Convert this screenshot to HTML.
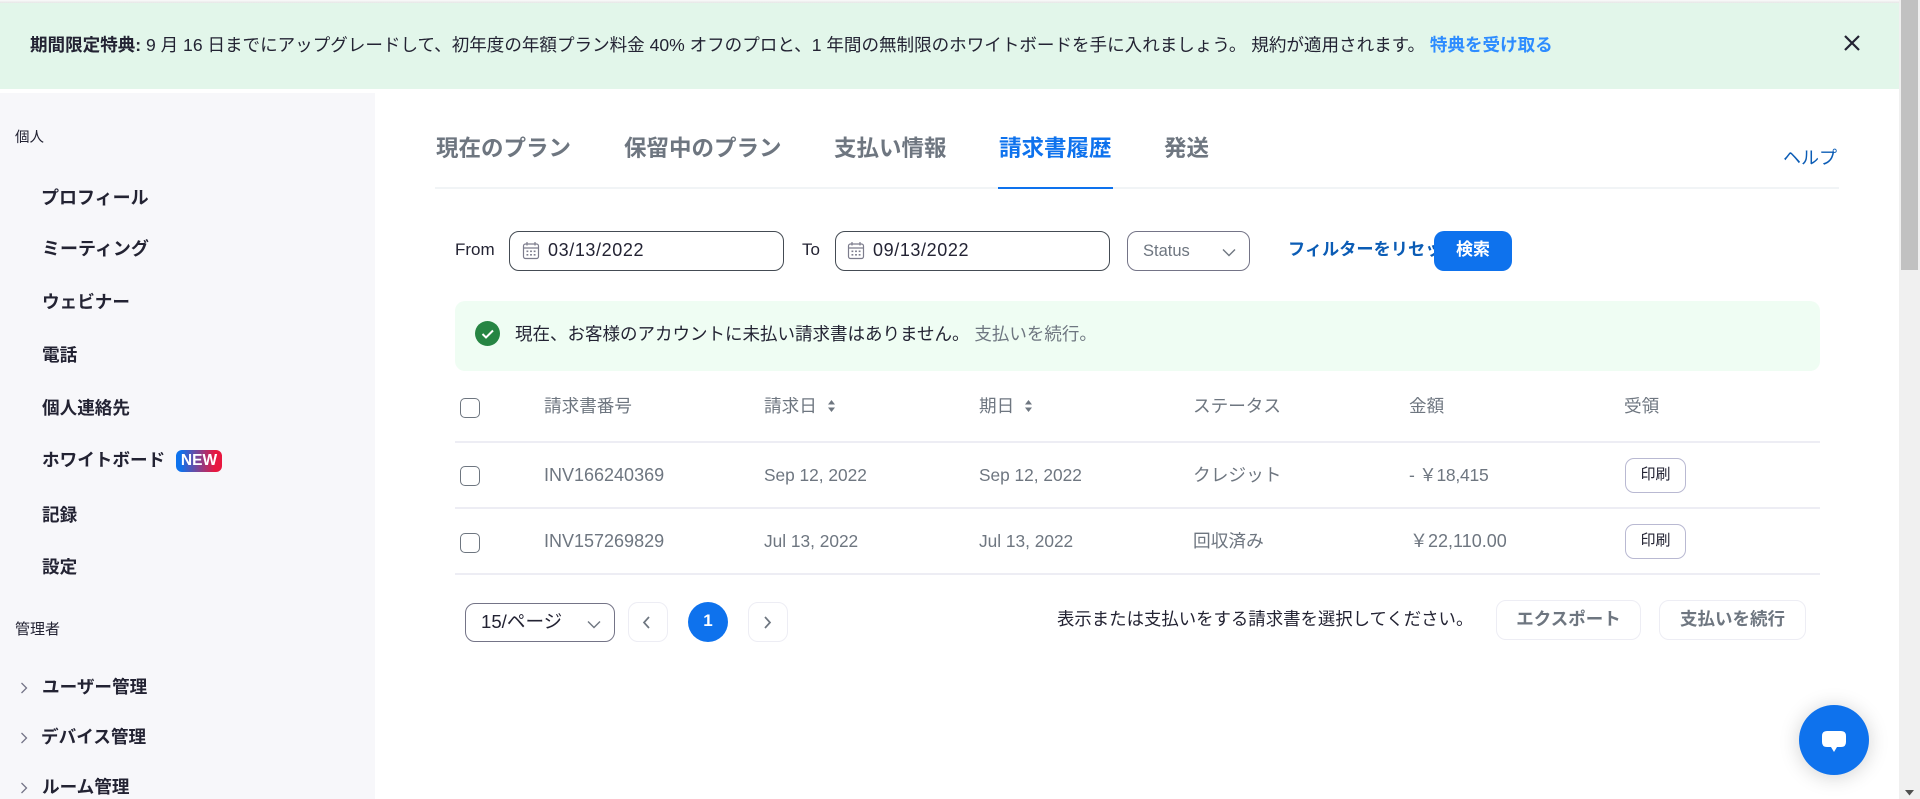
<!DOCTYPE html>
<html lang="ja">
<head>
<meta charset="utf-8">
<title>請求書履歴</title>
<style>
html,body{margin:0;padding:0;width:1920px;height:799px;overflow:hidden;background:#fff}
body{position:relative;font-family:"Liberation Sans","Noto Sans CJK JP",sans-serif;color:#232333}
.t{position:absolute;white-space:nowrap;line-height:26px;height:26px;margin-top:-13px}
.b{position:absolute;box-sizing:border-box;background:#fff}
.s{font-size:17.6px;font-weight:700;left:42px;color:#232333}
.tab{font-size:22.5px;font-weight:700;top:149px;color:#6e7680}
.th{font-size:17.6px;color:#6e7680;top:406px}
.td{font-size:17.5px;color:#6e7680}
.cb{border:1px solid #6e7680;border-radius:5px;width:20px;height:20px;left:460px}
.ln{position:absolute;left:455px;width:1365px;height:2px;background:#ededf4}
.pr{left:1625px;width:61px;height:35px;border:1px solid #b9b9d2;border-radius:9px;font-size:15px;text-align:center;line-height:32px;color:#232333}
.lat{font-size:18px}
.dt{font-size:17.3px}
svg{position:absolute;overflow:visible}
</style>
</head>
<body>
<div style="position:absolute;left:0;top:0;width:1899px;height:3px;background:linear-gradient(#fafafa,#e6e6e6)"></div>
<div style="position:absolute;left:0;top:3px;width:1899px;height:86px;background:#e2f6ea"></div>
<div class="t" style="left:30px;top:45px;font-size:17.56px;color:#232333"><b>期間限定特典:</b> 9 月 16 日までにアップグレードして、初年度の年額プラン料金 40% オフのプロと、1 年間の無制限のホワイトボードを手に入れましょう。 規約が適用されます。 <b style="color:#2d8cff">特典を受け取る</b></div>
<svg style="left:1843px;top:34px" width="18" height="18" viewBox="0 0 18 18"><path d="M2 2 L16 16 M16 2 L2 16" stroke="#232333" stroke-width="2.2" fill="none"/></svg>

<div style="position:absolute;left:0;top:93px;width:375px;height:706px;background:#f7f7fa"></div>
<div class="t" style="left:15px;top:138px;font-size:14.5px">個人</div>
<div class="t s" style="top:198px;left:41px;font-size:18px">プロフィール</div>
<div class="t s" style="top:249px;font-size:18px">ミーティング</div>
<div class="t s" style="top:302px">ウェビナー</div>
<div class="t s" style="top:355px">電話</div>
<div class="t s" style="top:408px">個人連絡先</div>
<div class="t s" style="top:460px">ホワイトボード</div>
<div class="b" style="left:176px;top:450px;width:46px;height:22px;border-radius:6px;background:linear-gradient(90deg,#0e72ed 10%,#e8173f 85%);color:#fff;font-size:15.5px;font-weight:700;text-align:center;line-height:21px">NEW</div>
<div class="t s" style="top:515px">記録</div>
<div class="t s" style="top:567px">設定</div>
<div class="t" style="left:15px;top:630px;font-size:15px">管理者</div>
<div class="t s" style="top:687px">ユーザー管理</div>
<div class="t s" style="top:737px;left:41px">デバイス管理</div>
<div class="t s" style="top:787px">ルーム管理</div>
<svg style="left:20px;top:682px" width="8" height="12" viewBox="0 0 8 12"><path d="M1.5 1 L6.5 6 L1.5 11" stroke="#747487" stroke-width="1.3" fill="none"/></svg>
<svg style="left:20px;top:732px" width="8" height="12" viewBox="0 0 8 12"><path d="M1.5 1 L6.5 6 L1.5 11" stroke="#747487" stroke-width="1.3" fill="none"/></svg>
<svg style="left:20px;top:782px" width="8" height="12" viewBox="0 0 8 12"><path d="M1.5 1 L6.5 6 L1.5 11" stroke="#747487" stroke-width="1.3" fill="none"/></svg>

<div class="t tab" style="left:436px">現在のプラン</div>
<div class="t tab" style="left:624px">保留中のプラン</div>
<div class="t tab" style="left:834px">支払い情報</div>
<div class="t tab" style="left:999px;color:#0e72ed">請求書履歴</div>
<div class="t tab" style="left:1164px">発送</div>
<div style="position:absolute;left:435px;top:187px;width:1404px;height:2px;background:#f1f4f6"></div>
<div style="position:absolute;left:998px;top:187px;width:115px;height:2px;background:#0e72ed"></div>
<div class="t" style="left:1783px;top:158px;font-size:18px;color:#0b5cb5">ヘルプ</div>

<div class="t" style="left:455px;top:250px;font-size:17px">From</div>
<div class="b" style="left:509px;top:231px;width:275px;height:40px;border:1px solid #444b53;border-radius:10px"></div>
<svg style="left:522px;top:241px" width="18" height="19" viewBox="0 0 18 19"><g fill="none" stroke="#7c7c8c" stroke-width="1.2"><rect x="1.5" y="3" width="15" height="14.5" rx="2"/><path d="M1.5 7 H16.5 M5 1 V4.5 M13 1 V4.5"/></g><g fill="#7c7c8c"><rect x="4.5" y="9.5" width="1.8" height="1.6"/><rect x="8.1" y="9.5" width="1.8" height="1.6"/><rect x="11.7" y="9.5" width="1.8" height="1.6"/><rect x="4.5" y="13" width="1.8" height="1.6"/><rect x="8.1" y="13" width="1.8" height="1.6"/><rect x="11.7" y="13" width="1.8" height="1.6"/></g></svg>
<div class="t" style="left:548px;top:250px;font-size:18px;letter-spacing:.6px">03/13/2022</div>
<div class="t" style="left:802px;top:250px;font-size:17px">To</div>
<div class="b" style="left:835px;top:231px;width:275px;height:40px;border:1px solid #444b53;border-radius:10px"></div>
<svg style="left:847px;top:241px" width="18" height="19" viewBox="0 0 18 19"><g fill="none" stroke="#7c7c8c" stroke-width="1.2"><rect x="1.5" y="3" width="15" height="14.5" rx="2"/><path d="M1.5 7 H16.5 M5 1 V4.5 M13 1 V4.5"/></g><g fill="#7c7c8c"><rect x="4.5" y="9.5" width="1.8" height="1.6"/><rect x="8.1" y="9.5" width="1.8" height="1.6"/><rect x="11.7" y="9.5" width="1.8" height="1.6"/><rect x="4.5" y="13" width="1.8" height="1.6"/><rect x="8.1" y="13" width="1.8" height="1.6"/><rect x="11.7" y="13" width="1.8" height="1.6"/></g></svg>
<div class="t" style="left:873px;top:250px;font-size:18px;letter-spacing:.6px">09/13/2022</div>
<div class="b" style="left:1127px;top:231px;width:123px;height:40px;border:1px solid #747487;border-radius:10px"></div>
<div class="t" style="left:1143px;top:251px;font-size:16.5px;color:#6e7680">Status</div>
<svg style="left:1222px;top:248px" width="14" height="9" viewBox="0 0 14 9"><path d="M1 1.5 L7 7.5 L13 1.5" stroke="#6e7680" stroke-width="1.4" fill="none"/></svg>
<div style="position:absolute;left:1288px;top:231px;width:147px;height:40px;overflow:hidden"><div class="t" style="left:0;top:18px;font-size:17.2px;font-weight:700;color:#0b5cb5">フィルターをリセット</div></div>
<div class="b" style="left:1434px;top:231px;width:78px;height:40px;border-radius:10px;background:#0e72ed;color:#fff;font-size:17px;font-weight:700;text-align:center;line-height:38px">検索</div>

<div class="b" style="left:455px;top:301px;width:1365px;height:70px;border-radius:10px;background:#effdf3"></div>
<svg style="left:475px;top:321px" width="25" height="25" viewBox="0 0 25 25"><circle cx="12.5" cy="12.5" r="12.5" fill="#268543"/><path d="M7.5 13 L11 16.5 L18 9.5" stroke="#fff" stroke-width="2" fill="none"/></svg>
<div class="t" style="left:515px;top:334px;font-size:17.5px">現在、お客様のアカウントに未払い請求書はありません。 <span style="color:#6e7680">支払いを続行。</span></div>

<div class="b cb" style="top:398px"></div>
<div class="t th" style="left:544px">請求書番号</div>
<div class="t th" style="left:764px">請求日</div>
<svg style="left:827px;top:399px" width="9" height="14" viewBox="0 0 9 14"><path d="M4.5 1 L8 5.5 H1 Z M4.5 13 L8 8.5 H1 Z" fill="#6e7680"/></svg>
<div class="t th" style="left:979px">期日</div>
<svg style="left:1024px;top:399px" width="9" height="14" viewBox="0 0 9 14"><path d="M4.5 1 L8 5.5 H1 Z M4.5 13 L8 8.5 H1 Z" fill="#6e7680"/></svg>
<div class="t th" style="left:1193px">ステータス</div>
<div class="t th" style="left:1409px">金額</div>
<div class="t th" style="left:1624px">受領</div>
<div class="ln" style="top:441px"></div>

<div class="b cb" style="top:466px"></div>
<div class="t td lat" style="left:544px;top:475px">INV166240369</div>
<div class="t td dt" style="left:764px;top:475px">Sep 12, 2022</div>
<div class="t td dt" style="left:979px;top:475px">Sep 12, 2022</div>
<div class="t td" style="left:1193px;top:475px;font-size:17.7px">クレジット</div>
<div class="t td" style="left:1409px;top:475px;letter-spacing:-.25px">- ￥18,415</div>
<div class="b pr" style="top:458px">印刷</div>
<div class="ln" style="top:507px"></div>

<div class="b cb" style="top:533px"></div>
<div class="t td lat" style="left:544px;top:541px">INV157269829</div>
<div class="t td dt" style="left:764px;top:541px">Jul 13, 2022</div>
<div class="t td dt" style="left:979px;top:541px">Jul 13, 2022</div>
<div class="t td" style="left:1193px;top:541px;font-size:17.7px">回収済み</div>
<div class="t td" style="left:1410px;top:541px;font-size:18px">￥22,110.00</div>
<div class="b pr" style="top:524px">印刷</div>
<div class="ln" style="top:573px"></div>

<div class="b" style="left:465px;top:603px;width:150px;height:39px;border:1px solid #747487;border-radius:10px"></div>
<div class="t" style="left:481px;top:622px;font-size:18.6px">15/ページ</div>
<svg style="left:587px;top:620px" width="14" height="9" viewBox="0 0 14 9"><path d="M1 1.5 L7 7.5 L13 1.5" stroke="#6e7680" stroke-width="1.4" fill="none"/></svg>
<div class="b" style="left:628px;top:602px;width:40px;height:40px;border:1px solid #ededf4;border-radius:10px"></div>
<svg style="left:642px;top:616px" width="9" height="13" viewBox="0 0 9 13"><path d="M7 1 L2 6.5 L7 12" stroke="#6e7680" stroke-width="1.7" fill="none"/></svg>
<div class="b" style="left:688px;top:602px;width:40px;height:40px;border-radius:50%;background:#0e72ed;color:#fff;font-size:17px;font-weight:700;text-align:center;line-height:38px">1</div>
<div class="b" style="left:748px;top:602px;width:40px;height:40px;border:1px solid #ededf4;border-radius:10px"></div>
<svg style="left:763px;top:616px" width="9" height="13" viewBox="0 0 9 13"><path d="M2 1 L7 6.5 L2 12" stroke="#6e7680" stroke-width="1.7" fill="none"/></svg>

<div class="t" style="left:1057px;top:619px;font-size:17.4px">表示または支払いをする請求書を選択してください。</div>
<div class="b" style="left:1496px;top:600px;width:145px;height:40px;border:1px solid #ededf4;border-radius:10px;color:#6e7680;font-size:17.5px;font-weight:700;text-align:center;line-height:36px">エクスポート</div>
<div class="b" style="left:1659px;top:600px;width:147px;height:40px;border:1px solid #ededf4;border-radius:10px;color:#6e7680;font-size:17.5px;font-weight:700;text-align:center;line-height:36px">支払いを続行</div>

<div style="position:absolute;left:1799px;top:705px;width:70px;height:70px;border-radius:50%;background:#0e72ed;box-shadow:0 2px 20px rgba(0,0,0,.18)"></div>
<svg style="left:1822px;top:731px" width="24" height="22" viewBox="0 0 24 22"><path d="M5 0 H19 Q24 0 24 5 V11 Q24 16 19 16 H15 L12 21 L9 16 H5 Q0 16 0 11 V5 Q0 0 5 0 Z" fill="#fff"/></svg>

<div style="position:absolute;left:1899px;top:0;width:21px;height:799px;background:#f0f0f0"></div>
<div style="position:absolute;left:1901px;top:0;width:17px;height:270px;background:#c1c1c1"></div>
<svg style="left:1905px;top:790px" width="9" height="6" viewBox="0 0 9 6"><path d="M0 0 H9 L4.5 5.5 Z" fill="#505050"/></svg>
</body>
</html>
